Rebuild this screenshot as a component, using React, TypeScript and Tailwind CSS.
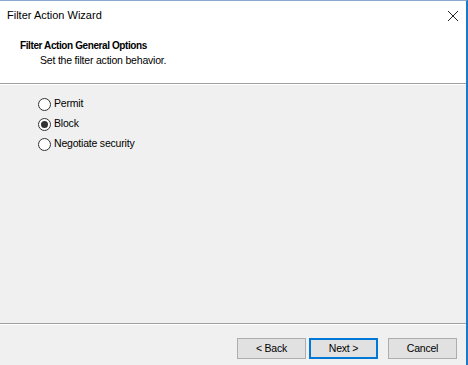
import React from 'react';

const FONT = { fontFamily: '"Liberation Sans", Arial, sans-serif' };

function Radio({ label, checked }: { label: string; checked?: boolean }) {
  return (
    <label className="flex items-center gap-[3px] h-[20px] text-[10.5px] tracking-[-0.2px] text-black">
      <span className="w-[13px] h-[13px] rounded-full border border-[#333333] bg-white flex items-center justify-center">
        {checked && <span className="w-[7px] h-[7px] rounded-full bg-[#333333]" />}
      </span>
      <span>{label}</span>
    </label>
  );
}

function Button({ children, primary }: { children: React.ReactNode; primary?: boolean }) {
  return (
    <button
      className={`w-[69px] h-[21px] text-[10.5px] tracking-[-0.2px] text-black bg-[#e1e1e1] border flex items-center justify-center ${
        primary ? 'border-[#0078d7] border-2' : 'border-[#adadad]'
      }`}
    >
      {children}
    </button>
  );
}

export default function App() {
  return (
    <div
      className="w-[468px] h-[365px] bg-[#f0f0f0] flex flex-col border-t border-t-[#8aa9cf] border-r-2 border-r-[#1979ca] overflow-hidden"
      style={FONT}
    >
      {/* Title bar */}
      <div className="h-[29px] shrink-0 bg-white flex items-center justify-between pl-[7px] pr-[7px]">
        <span className="text-[11px] text-black">Filter Action Wizard</span>
        <svg width="12" height="12" viewBox="0 0 12 12">
          <path d="M1 1 L11 11 M11 1 L1 11" stroke="#222" strokeWidth="1" />
        </svg>
      </div>

      {/* Header */}
      <div className="h-[53px] shrink-0 bg-white pl-[20px] pt-[9px]">
        <div className="text-[10px] font-bold tracking-[-0.4px] text-black leading-[14px]">
          Filter Action General Options
        </div>
        <div className="text-[10.5px] tracking-[-0.2px] text-black pl-[20px] leading-[14px]">
          Set the filter action behavior.
        </div>
      </div>
      <div className="h-px bg-[#a0a0a0] shrink-0" />
      <div className="h-px bg-white shrink-0" />

      {/* Body */}
      <div className="flex-1 flex flex-col pl-[38px] pt-[9px]">
        <Radio label="Permit" />
        <Radio label="Block" checked />
        <Radio label="Negotiate security" />
      </div>

      {/* Footer */}
      <div className="h-px bg-[#a0a0a0] shrink-0" />
      <div className="h-px bg-white shrink-0" />
      <div className="h-[40px] shrink-0 flex items-start justify-end pr-[9px] pt-[13px]">
        <div className="flex items-center gap-[3px]">
          <Button>&lt; Back</Button>
          <Button primary>Next &gt;</Button>
        </div>
        <div className="ml-[10px]">
          <Button>Cancel</Button>
        </div>
      </div>
    </div>
  );
}
